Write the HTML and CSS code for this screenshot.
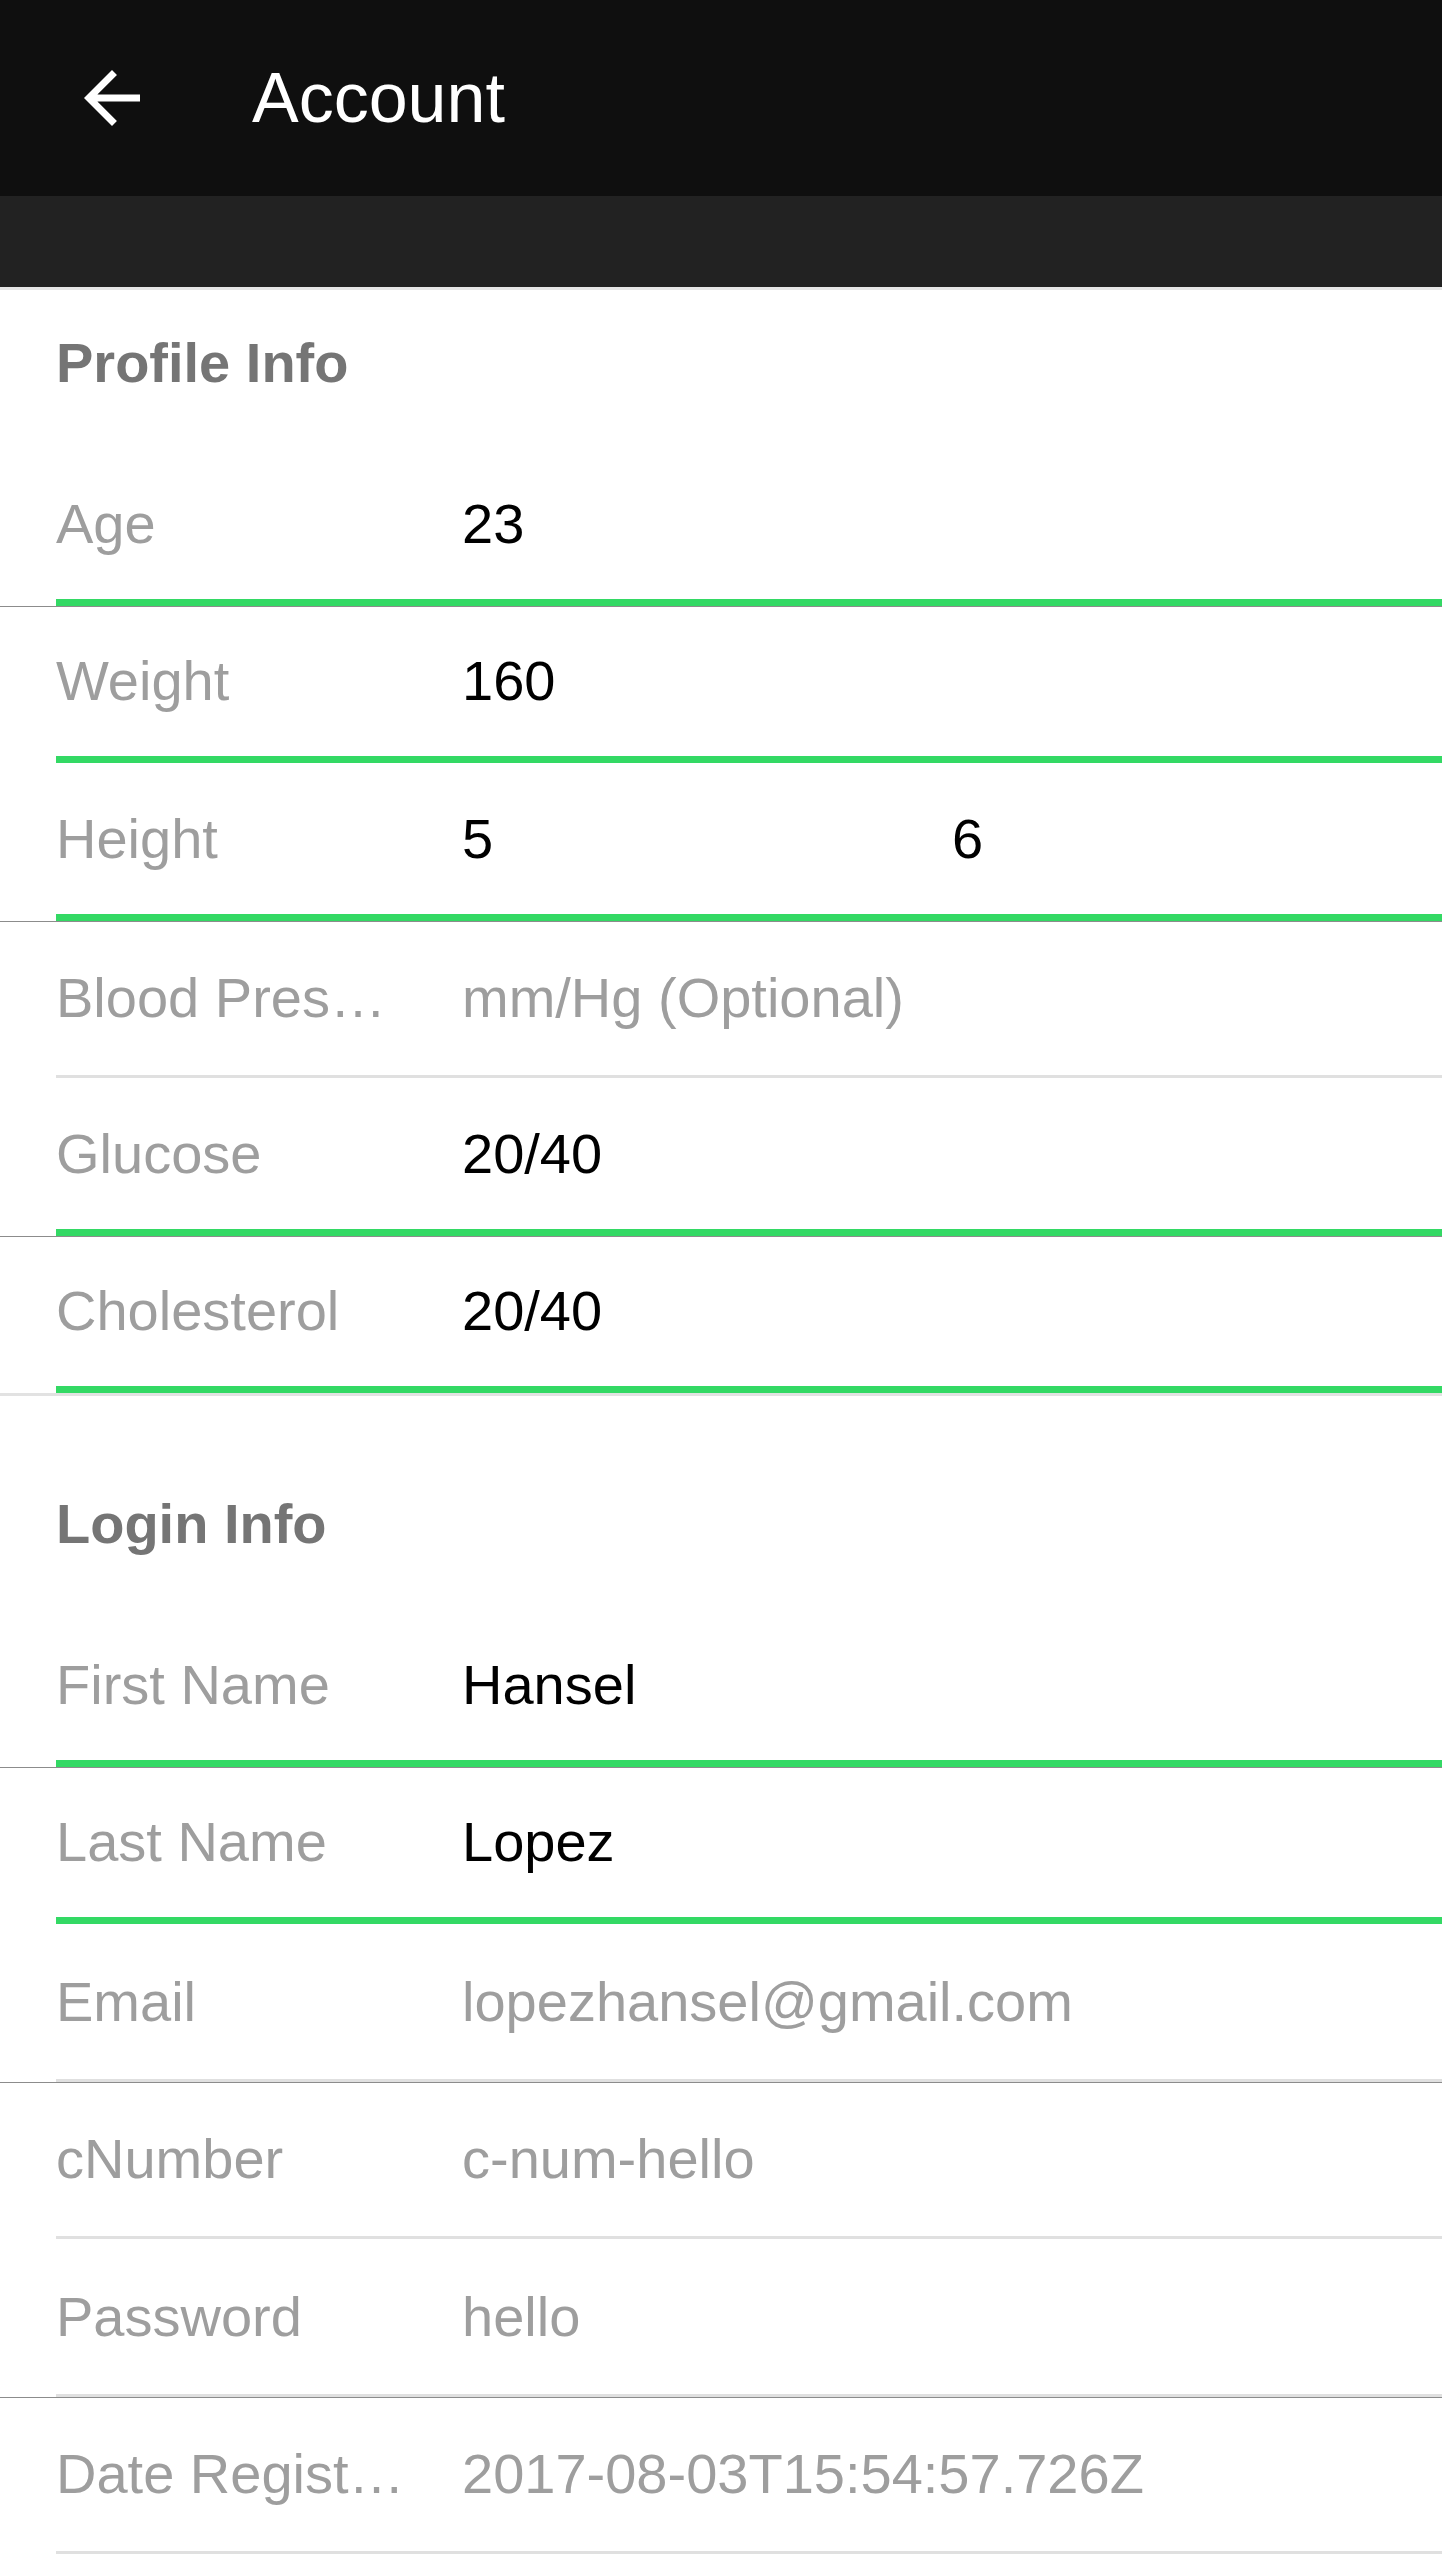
FILE: index.html
```html
<!DOCTYPE html>
<html lang="en">
<head>
<meta charset="utf-8">
<title>Account</title>
<link rel="stylesheet" href="styles.css">
</head>
<body>
<header class="appbar">
  <svg class="back" viewBox="0 0 24 24" aria-hidden="true"><path d="M20 11H7.83l5.59-5.59L12 4l-8 8 8 8 1.41-1.41L7.83 13H20v-2z"/></svg>
  <h1 class="title">Account</h1>
</header>
<div class="subbar"></div>

<section class="section">
  <h2 class="heading">Profile Info</h2>
  <div class="row hair"><div class="field active"><span class="label">Age</span><span class="value">23</span></div></div>
  <div class="row"><div class="field active"><span class="label">Weight</span><span class="value">160</span></div></div>
  <div class="row hair"><div class="field active"><span class="label">Height</span><span class="value half">5</span><span class="value half">6</span></div></div>
  <div class="row"><div class="field muted"><span class="label">Blood Pressure</span><span class="value dim">mm/Hg (Optional)</span></div></div>
  <div class="row hair"><div class="field active"><span class="label">Glucose</span><span class="value">20/40</span></div></div>
  <div class="row"><div class="field active"><span class="label">Cholesterol</span><span class="value">20/40</span></div></div>
</section>

<section class="section login">
  <h2 class="heading">Login Info</h2>
  <div class="row hair"><div class="field active"><span class="label">First Name</span><span class="value">Hansel</span></div></div>
  <div class="row"><div class="field active"><span class="label">Last Name</span><span class="value">Lopez</span></div></div>
  <div class="row hair"><div class="field muted"><span class="label">Email</span><span class="value dim">lopezhansel@gmail.com</span></div></div>
  <div class="row"><div class="field muted"><span class="label">cNumber</span><span class="value dim">c-num-hello</span></div></div>
  <div class="row hair"><div class="field muted"><span class="label">Password</span><span class="value dim">hello</span></div></div>
  <div class="row"><div class="field muted"><span class="label">Date Registered</span><span class="value dim">2017-08-03T15:54:57.726Z</span></div></div>
</section>
</body>
</html>
```
FILE: styles.css
```css
* { box-sizing: border-box; }

html, body {
  margin: 0;
  padding: 0;
  background: #ffffff;
}

body {
  font-family: "Liberation Sans", Arial, sans-serif;
  font-size: 56px;
  color: #000;
}

.appbar {
  height: 196px;
  background: #0f0f0f;
  display: flex;
  align-items: center;
  padding-left: 70px;
}

.back {
  width: 84px;
  height: 84px;
  fill: #ffffff;
  flex: none;
}

.title {
  margin: 0 0 0 98px;
  font-size: 70px;
  font-weight: normal;
  line-height: 1.15;
  color: #ffffff;
}

.subbar {
  height: 94px;
  background: #222222;
  border-bottom: 3px solid #e6e6e6;
}

.section {
  border-bottom: 3px solid #e2e2e2;
}

.section.login {
  margin-top: 55px;
  border-bottom: none;
}

.heading {
  margin: 0;
  height: 158px;
  padding: 41px 0 0 56px;
  font-size: 56px;
  line-height: 64px;
  font-weight: bold;
  color: #757575;
}

.row {
  height: 157.5px;
  padding-left: 56px;
  display: flex;
}

.row.hair {
  box-shadow: 0 1px 0 #8c8c8c;
  position: relative;
}

.field {
  flex: 1;
  display: flex;
  align-items: center;
  min-width: 0;
}

.field.active {
  border-bottom: 7px solid #33d964;
}

.field.muted {
  border-bottom: 3px solid #e0e0e0;
}

.label {
  flex: none;
  width: 352px;
  margin-right: 54px;
  color: #9e9e9e;
  white-space: nowrap;
  overflow: hidden;
  text-overflow: ellipsis;
  line-height: 63px;
}

.value {
  flex: 1;
  min-width: 0;
  color: #000000;
  white-space: nowrap;
  line-height: 63px;
}

.value.dim {
  color: #9e9e9e;
}
```
